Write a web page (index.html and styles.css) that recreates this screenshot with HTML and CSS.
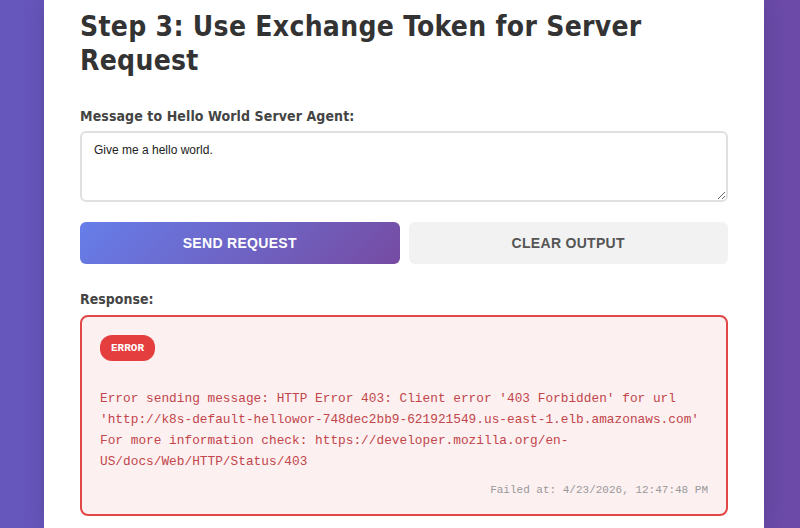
FILE: index.html
```html
<!DOCTYPE html>
<html lang="en">
<head>
    <meta charset="UTF-8">
    <meta name="viewport" content="width=device-width, initial-scale=1.0">
    <title>Hello World Agent - Token Exchange</title>
    <link rel="stylesheet" href="styles.css">
</head>
<body>
    <div class="page">
        <div class="card">
            <h2>Step 3: Use Exchange Token for Server Request</h2>

            <div class="form-group">
                <label for="message">Message to Hello World Server Agent:</label>
                <textarea id="message" rows="3">Give me a hello world.</textarea>
            </div>

            <div class="actions">
                <button class="btn btn-primary">Send Request</button>
                <button class="btn btn-secondary">Clear Output</button>
            </div>

            <div class="response">
                <div class="response-label">Response:</div>
                <div class="response-box error">
                    <span class="badge">ERROR</span>
                    <pre class="response-text">Error sending message: HTTP Error 403: Client error '403 Forbidden' for url 'http://k8s-default-hellowor-748dec2bb9-621921549.us-east-1.elb.amazonaws.com'
For more information check: https://developer.mozilla.org/en-US/docs/Web/HTTP/Status/403</pre>
                    <div class="timestamp">Failed at: 4/23/2026, 12:47:48 PM</div>
                </div>
            </div>
        </div>
    </div>
</body>
</html>
```

FILE: styles.css
```css
body {
    font-family: "DejaVu Sans Condensed", "DejaVu Sans", Tahoma, sans-serif;
    font-stretch: condensed;
    margin: 0;
    padding: 0;
    height: 528px;
    overflow: hidden;
    background: linear-gradient(90deg, #6657bd 0%, #6b4aa8 100%);
}

.page {
    padding-left: 44px;
}

.card {
    background-color: #fff;
    width: 720px;
    height: 528px;
    box-sizing: border-box;
    padding: 10px 36px 0;
    box-shadow: 0 0 20px rgba(0, 0, 0, 0.15);
}

.card h2 {
    color: #333;
    font-size: 28px;
    line-height: 1.2;
    letter-spacing: 0.3px;
    margin: 0 0 31px;
}

.form-group {
    margin-bottom: 20px;
}

.form-group label {
    display: block;
    font-weight: bold;
    font-size: 14px;
    letter-spacing: 0.1px;
    color: #444;
    margin-bottom: 7px;
}

.form-group textarea {
    display: block;
    width: 100%;
    box-sizing: border-box;
    height: 71px;
    padding: 10px 12px;
    border: 2px solid #e0e0e0;
    border-radius: 6px;
    font-family: "Liberation Sans", Arial, sans-serif;
    font-stretch: normal;
    font-size: 12px;
    color: #222;
    resize: vertical;
}

.actions {
    display: flex;
    gap: 9px;
    margin-bottom: 27px;
}

.btn {
    flex: 1;
    height: 42px;
    border: none;
    border-radius: 6px;
    font-family: "Liberation Sans", Arial, sans-serif;
    font-stretch: normal;
    font-size: 14px;
    font-weight: bold;
    letter-spacing: 0.3px;
    text-transform: uppercase;
    cursor: pointer;
}

.btn-primary {
    background: linear-gradient(135deg, #667eea 0%, #764ba2 100%);
    color: #fff;
}

.btn-secondary {
    background-color: #f2f2f2;
    color: #555;
}

.response-label {
    font-weight: bold;
    font-size: 14px;
    color: #444;
    margin-bottom: 8px;
}

.response-box {
    border-radius: 8px;
    padding: 18px;
}

.response-box.error {
    background-color: #fcf0f1;
    border: 2px solid #e04848;
}

.badge {
    display: inline-block;
    background-color: #e53e3e;
    color: #fff;
    font-family: "Liberation Mono", "Courier New", monospace;
    font-size: 11px;
    font-weight: bold;
    padding: 7px 11px;
    border-radius: 12px;
}

.response-text {
    font-family: "Liberation Mono", "Courier New", monospace;
    font-size: 12.8px;
    line-height: 21px;
    color: #c2454a;
    white-space: pre-wrap;
    word-break: normal;
    margin: 27px 0 12px;
}

.timestamp {
    text-align: right;
    font-family: "Liberation Mono", "Courier New", monospace;
    font-size: 11px;
    color: #999;
}
```
